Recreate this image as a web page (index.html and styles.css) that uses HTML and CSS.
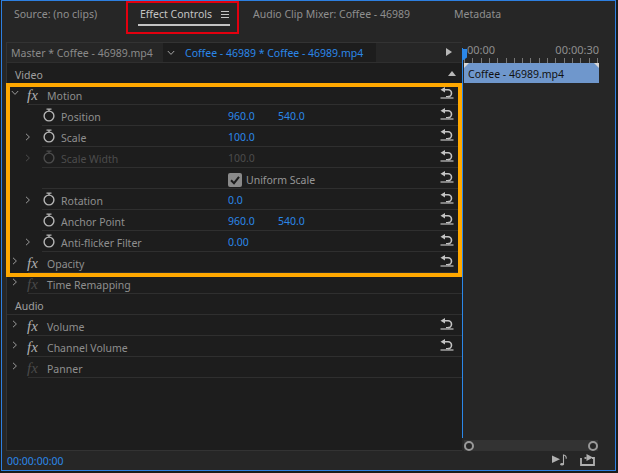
FILE: index.html
```html
<!DOCTYPE html>
<html lang="en">
<head>
<meta charset="utf-8">
<title>Effect Controls</title>
<link rel="stylesheet" href="styles.css">
</head>
<body>
<svg width="0" height="0" class="defs">
  <defs>
    <symbol id="watch" viewBox="0 0 14 14"><path d="M4.5 1.2h5M7 1.2v2" fill="none" stroke="currentColor" stroke-width="1.3"/><circle cx="7" cy="8" r="4.9" fill="none" stroke="currentColor" stroke-width="1.4"/></symbol>
    <symbol id="reset" viewBox="0 0 14 14"><path d="M4.5 2.8h3.6a3.4 3.4 0 0 1 0 6.8" fill="none" stroke="currentColor" stroke-width="1.6"/><path d="M0.5 2.8 5 0v5.6z" fill="currentColor"/><path d="M6 9.6h2.5" stroke="currentColor" stroke-width="1.2"/><path d="M0.5 11h13" stroke="currentColor" stroke-width="1.2"/></symbol>
    <symbol id="right" viewBox="0 0 6 8"><path d="M1 .8 4.4 4 1 7.2" fill="none" stroke="currentColor"/></symbol>
    <symbol id="down" viewBox="0 0 8 6"><path d="M.8 1 4 4.4 7.2 1" fill="none" stroke="currentColor"/></symbol>
  </defs>
</svg>
<main class="frame">
  <nav class="tabs">
    <span class="tab tab-source">Source: (no clips)</span>
    <span class="tab tab-active">Effect Controls<span class="menu"><i></i><i></i><i></i></span></span>
    <span class="tab tab-mixer">Audio Clip Mixer: Coffee - 46989</span>
    <span class="tab tab-meta">Metadata</span>
    <span class="redbox"></span>
  </nav>
  <div class="body">
    <section class="panel">
      <header class="clipbar">
        <span class="master">Master * Coffee - 46989.mp4</span>
        <span class="clipsel"><svg class="chev-down"><use href="#down"/></svg><span class="cliplink">Coffee - 46989 * Coffee - 46989.mp4</span></span>
        <span class="play"></span>
      </header>
      <div class="section"><span>Video</span><span class="up"></span></div>
      <div class="row row-fx"><svg class="chev-down tw"><use href="#down"/></svg><em class="fx">fx</em><span class="name">Motion</span><svg class="reset"><use href="#reset"/></svg></div>
      <div class="row row-prop"><svg class="watch"><use href="#watch"/></svg><span class="label">Position</span><span class="v1">960.0</span><span class="v2">540.0</span><svg class="reset"><use href="#reset"/></svg></div>
      <div class="row row-prop"><svg class="tw tw-prop"><use href="#right"/></svg><svg class="watch"><use href="#watch"/></svg><span class="label">Scale</span><span class="v1">100.0</span><svg class="reset"><use href="#reset"/></svg></div>
      <div class="row row-prop off"><svg class="tw tw-prop"><use href="#right"/></svg><svg class="watch"><use href="#watch"/></svg><span class="label">Scale Width</span><span class="v1">100.0</span><svg class="reset on"><use href="#reset"/></svg></div>
      <div class="row row-prop"><span class="check"><svg viewBox="0 0 14 14"><path d="M3 7.2 6 10.2 11 3.8" fill="none" stroke="#1d1d1d" stroke-width="2"/></svg></span><span class="uniform">Uniform Scale</span><svg class="reset"><use href="#reset"/></svg></div>
      <div class="row row-prop"><svg class="tw tw-prop"><use href="#right"/></svg><svg class="watch"><use href="#watch"/></svg><span class="label">Rotation</span><span class="v1">0.0</span><svg class="reset"><use href="#reset"/></svg></div>
      <div class="row row-prop"><svg class="watch"><use href="#watch"/></svg><span class="label">Anchor Point</span><span class="v1">960.0</span><span class="v2">540.0</span><svg class="reset"><use href="#reset"/></svg></div>
      <div class="row row-prop"><svg class="tw tw-prop"><use href="#right"/></svg><svg class="watch"><use href="#watch"/></svg><span class="label">Anti-flicker Filter</span><span class="v1">0.00</span><svg class="reset"><use href="#reset"/></svg></div>
      <div class="row row-fx"><svg class="tw"><use href="#right"/></svg><em class="fx">fx</em><span class="name">Opacity</span><svg class="reset"><use href="#reset"/></svg></div>
      <div class="row row-fx"><svg class="tw"><use href="#right"/></svg><em class="fx fx-off">fx</em><span class="name">Time Remapping</span></div>
      <div class="section section-audio"><span>Audio</span></div>
      <div class="row row-fx"><svg class="tw"><use href="#right"/></svg><em class="fx">fx</em><span class="name">Volume</span><svg class="reset"><use href="#reset"/></svg></div>
      <div class="row row-fx"><svg class="tw"><use href="#right"/></svg><em class="fx">fx</em><span class="name">Channel Volume</span><svg class="reset"><use href="#reset"/></svg></div>
      <div class="row row-fx"><svg class="tw"><use href="#right"/></svg><em class="fx fx-off">fx</em><span class="name">Panner</span></div>
      <div class="orange"></div>
    </section>
    <section class="timeline">
      <div class="ruler">
        <div class="times"><span>00:00</span><span>00:00:30</span></div>
        <div class="ticks"></div>
      </div>
      <div class="clip">Coffee - 46989.mp4</div>
      <div class="spacer"></div>
      <div class="scroll"><span class="knob"></span><span class="knob"></span></div>
      <div class="playhead"></div>
      <div class="headcap"></div>
    </section>
  </div>
  <footer class="foot">
    <span class="timecode">00:00:00:00</span>
    <span class="tools">
      <svg class="tool" viewBox="0 0 16 12" width="16" height="12"><path d="M0 1.5 8 5.2 0 9z" fill="#b0b0b0"/><path d="M11.5 10.5V1c1.8.3 3 1.6 2.7 3.8" fill="none" stroke="#b0b0b0" stroke-width="1.1"/><ellipse cx="10" cy="10.3" rx="1.8" ry="1.3" fill="#b0b0b0"/></svg>
      <svg class="tool" viewBox="0 0 15 12" width="15" height="12"><path d="M1 4v7h13V4h-2" fill="none" stroke="#b0b0b0" stroke-width="1.8"/><path d="M4.5 4h2" stroke="#b0b0b0" stroke-width="1.8"/><path d="M6.5 0 13 3.5 6.5 7z" fill="#b0b0b0"/></svg>
    </span>
  </footer>
</main>
</body>
</html>
```
FILE: styles.css
```css
* { box-sizing: border-box; }
html, body { margin: 0; height: 100%; }
body {
  background: #1c1c1c;
  font-family: "Noto Sans", sans-serif;
  font-size: 10.5px;
  color: #a6a6a6;
  overflow: hidden;
}
.defs { position: absolute; }
.frame {
  width: 615px;
  height: 471px;
  margin-left: 1px;
  border: 1px solid #2d7fe0;
  background: #262626;
  display: flex;
  flex-direction: column;
}
.tabs { position: relative; height: 41px; flex: none; }
.tab { position: absolute; top: 6px; white-space: nowrap; color: #8f8f8f; }
.tab-source { left: 12px; }
.tab-active { left: 138px; color: #c4c4c4; display: flex; align-items: center; }
.tab-mixer { left: 251px; }
.tab-meta { left: 452px; }
.menu { display: flex; flex-direction: column; gap: 2px; margin-left: 9px; }
.menu i { display: block; width: 8px; height: 1px; background: #c4c4c4; }
.tab-active::after { content: ""; position: absolute; left: -2px; right: -1px; top: 17px; height: 2px; background: #c4c4c4; }
.redbox { position: absolute; left: 124px; top: 0; width: 113px; height: 33px; border: 2px solid #e3000f; }
.body { flex: 1; display: flex; min-height: 0; padding-left: 4px; }
.panel {
  position: relative;
  width: 456px;
  flex: none;
  background: #1d1d1d;
  border-left: 1px solid #333;
  border-top: 1px solid #333;
  border-bottom: 1px solid #333;
}
.clipbar { height: 20px; display: flex; align-items: center; border-bottom: 1px solid #2f2f2f; background: #262626; position: relative; }
.master { width: 156px; padding-left: 4px; color: #8a8a8a; white-space: nowrap; }
.clipsel { display: flex; align-items: center; width: 213px; height: 100%; background: #1d1d1d; }
.chev-down { width: 8px; height: 6px; color: #a6a6a6; flex: none; margin-left: 4px; }
.cliplink { color: #2b87e8; margin-left: 10px; white-space: nowrap; }
.play { position: absolute; right: 10px; top: 5px; border-left: 6px solid #b8b8b8; border-top: 4.5px solid transparent; border-bottom: 4.5px solid transparent; }
.section { height: 21px; display: flex; align-items: center; justify-content: space-between; padding: 3px 0 0 8px; color: #a0a0a0; border-bottom: 1px solid #2f2f2f; background: #1d1d1d; position: relative; }
.up { position: absolute; right: 6px; top: 8px; border-bottom: 5px solid #b8b8b8; border-left: 4px solid transparent; border-right: 4px solid transparent; }
.row { position: relative; height: 21px; display: flex; align-items: center; }
.row::after { content: ""; position: absolute; right: 0; bottom: 0; height: 1px; background: #2f2f2f; }
.row-fx::after { left: 21px; }
.row-prop::after { left: 35px; }
.tw { position: absolute; left: 5px; top: 5px; width: 6px; height: 8px; color: #9a9a9a; margin: 0; }
.chev-down.tw { width: 8px; height: 6px; left: 4px; top: 6px; }
.tw-prop { left: 18px; top: 7px; }
.fx { position: absolute; left: 20px; top: 2px; font-family: "Liberation Serif", serif; font-size: 15px; line-height: 18px; color: #b0b0b0; }
.fx-off { color: #4a4a4a; }
.name { position: absolute; left: 40px; top: 5px; color: #8f8f8f; }
.label { position: absolute; left: 54px; top: 5px; color: #8f8f8f; white-space: nowrap; }
.v1, .v2 { position: absolute; top: 4px; color: #2b87e8; }
.v1 { left: 221px; }
.v2 { left: 271px; }
.watch { position: absolute; left: 35px; top: 3px; width: 14px; height: 14px; color: #b5b5b5; }
.reset { position: absolute; right: 8px; top: 3px; width: 14px; height: 14px; color: #c4c4c4; }
.off .label, .off .v1 { color: #4c4c4c; }
.off .watch, .off .tw { color: #4c4c4c; }
.check { position: absolute; left: 221px; top: 5px; width: 14px; height: 14px; background: #8a8a8a; border-radius: 2px; display: flex; }
.uniform { position: absolute; left: 239px; top: 5px; color: #969696; }
.orange { position: absolute; left: -1px; top: 40px; width: 456px; height: 194px; border: 4px solid #ffa800; }
.timeline { position: relative; flex: 1; display: flex; flex-direction: column; padding-left: 2px; padding-right: 16px; }
.ruler { height: 21px; position: relative; }
.times { display: flex; justify-content: space-between; padding: 1px 0 0 3px; color: #8f8f8f; line-height: 14px; font-size: 11px; }
.ticks { position: absolute; left: 0; right: 0; bottom: 0; height: 5px; background: repeating-linear-gradient(90deg, #777 0 1px, transparent 1px 8.3px); }
.clip { position: relative; height: 20px; background: #6f97cc; color: #111; padding: 3px 0 0 4px; line-height: 16px; white-space: nowrap; }
.clip::before, .clip::after { content: ""; position: absolute; top: 0; width: 5px; height: 5px; background: #d8d8d8; }
.clip::before { left: 0; clip-path: polygon(0 0, 100% 0, 0 100%); }
.clip::after { right: 0; clip-path: polygon(0 0, 100% 0, 100% 100%); }
.spacer { flex: 1; }
.scroll { height: 11px; margin-right: 1px; background: #333; display: flex; justify-content: space-between; align-items: center; }
.knob { width: 10px; height: 10px; border: 2px solid #999; border-radius: 50%; background: #262626; }
.playhead { position: absolute; left: 0; top: 6px; bottom: 13px; width: 1px; background: #2b87e8; }
.headcap { position: absolute; left: 0; top: 7px; width: 5px; height: 12px; background: #2b87e8; clip-path: polygon(0 0, 100% 0, 100% 70%, 0 100%); }
.foot { height: 19px; flex: none; display: flex; align-items: center; justify-content: space-between; padding: 0 20px 2px 5px; }
.timecode { color: #2b87e8; font-size: 10.5px; margin-top: 2px; }
.tools { display: flex; gap: 12px; align-items: center; }
```
